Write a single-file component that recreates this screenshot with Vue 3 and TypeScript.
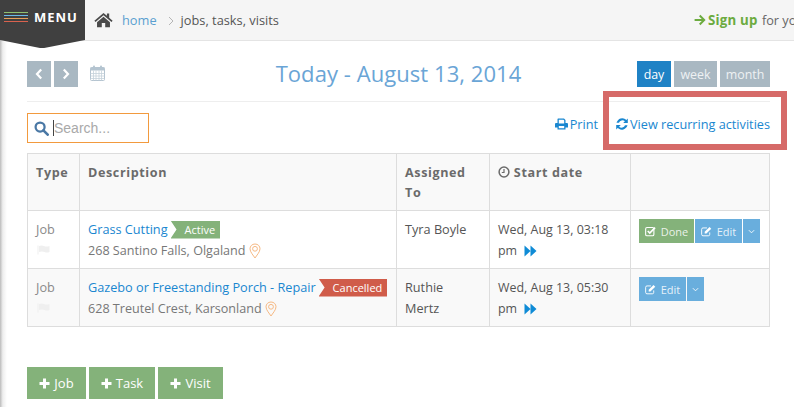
<script setup lang="ts">
interface Row {
  title: string
  status: string
  statusClass: string
  address: string
  assigned: string
  date: string
  done: boolean
}
const rows: Row[] = [
  { title: 'Grass Cutting', status: 'Active', statusClass: 'active', address: '268 Santino Falls, Olgaland', assigned: 'Tyra Boyle', date: 'Wed, Aug 13, 03:18 pm', done: true },
  { title: 'Gazebo or Freestanding Porch - Repair', status: 'Cancelled', statusClass: 'cancelled', address: '628 Treutel Crest, Karsonland', assigned: 'Ruthie Mertz', date: 'Wed, Aug 13, 05:30 pm', done: false },
]
const addButtons = ['Job', 'Task', 'Visit']
</script>

<template>
  <div class="page">
    <header class="topbar">
      <div class="menu">
        <span class="burger"><i class="l1"></i><i class="l2"></i><i class="l3"></i><i class="l4"></i></span>
        <span class="menu-text">MENU</span>
      </div>
      <nav class="crumbs">
        <svg class="home" viewBox="0 0 20 16" width="19" height="16"><path fill="#4a4a4a" d="M10 0.5 L13.6 3.6 V1.2 H16 V5.7 L19.6 8.8 L18.4 10.1 L10 3 L1.6 10.1 L0.4 8.8 Z M10 4.6 L16.8 10.3 V15.6 H11.8 V11.2 H8.2 V15.6 H3.2 V10.3 Z"/></svg>
        <a class="home-link">home</a>
        <svg class="sep" viewBox="0 0 6 10" width="6" height="10"><path d="M1 1 L5 5 L1 9" fill="none" stroke="#b5b5b5" stroke-width="1"/></svg>
        <span class="here">jobs, tasks, visits</span>
      </nav>
      <div class="signup">
        <svg viewBox="0 0 12 12" width="12" height="12"><path fill="#6cab3f" d="M6.4 0.8 L11.6 6 L6.4 11.2 L5 9.8 L7.8 7 H0.6 V5 H7.8 L5 2.2 Z"/></svg>
        <b>Sign up</b><span> for your free account</span>
      </div>
    </header>

    <main class="content">
      <section class="datebar">
        <div class="nav-group">
          <button class="nav-btn"><svg viewBox="0 0 8 12" width="8" height="12"><path d="M6.2 1.5 L2 6 L6.2 10.5" fill="none" stroke="#fff" stroke-width="2.2"/></svg></button>
          <button class="nav-btn"><svg viewBox="0 0 8 12" width="8" height="12"><path d="M1.8 1.5 L6 6 L1.8 10.5" fill="none" stroke="#fff" stroke-width="2.2"/></svg></button>
          <svg class="cal" viewBox="0 0 15 16" width="15" height="16">
            <rect x="0.5" y="2.5" width="14" height="13" rx="1" fill="#fff" stroke="#b4c4d0"/>
            <rect x="0.5" y="2.5" width="14" height="3" fill="#b4c4d0"/>
            <rect x="3" y="0.5" width="2" height="4" rx="1" fill="#b4c4d0"/>
            <rect x="10" y="0.5" width="2" height="4" rx="1" fill="#b4c4d0"/>
            <path d="M0.5 8.5 H14.5 M0.5 11 H14.5 M0.5 13.5 H14.5 M3.5 5.5 V15.5 M6 5.5 V15.5 M9 5.5 V15.5 M11.5 5.5 V15.5" stroke="#c5d2db" stroke-width="0.8" fill="none"/>
          </svg>
        </div>
        <h1 class="title">Today - August 13, 2014</h1>
        <div class="range">
          <button class="range-btn on">day</button>
          <button class="range-btn">week</button>
          <button class="range-btn">month</button>
        </div>
      </section>

      <section class="tools">
        <div class="search">
          <svg viewBox="0 0 16 16" width="15" height="15"><circle cx="6.5" cy="6.5" r="4.8" fill="none" stroke="#4a78a5" stroke-width="2.4"/><path d="M10 10 L14.6 14.6" stroke="#4a78a5" stroke-width="2.8" stroke-linecap="round"/></svg>
          <span class="caret"></span>
          <span class="placeholder">Search...</span>
        </div>
        <div class="links">
          <a class="link print">
            <svg viewBox="0 0 13 12" width="13" height="12"><path fill="#1a87d0" d="M3 0.5 H9 L10.5 2 V5 H12 Q13 5 13 6 V9.5 H10.5 V11.5 H2.5 V9.5 H0 V6 Q0 5 1 5 H2.5 V1 Z M3.8 1.7 V5.6 H9.2 V2.6 L8.4 1.7 Z M3.8 8 V10.3 H9.2 V8 Z"/></svg>
            Print
          </a>
          <a class="link recurring">
            <svg viewBox="0 0 12 12" width="12" height="12"><path fill="#1a87d0" d="M11.8 0.4 V5 H7.2 L8.9 3.3 A3.6 3.6 0 0 0 3 4.8 L0.5 4.8 A6 6 0 0 1 10.3 1.9 Z M0.2 11.6 V7 H4.8 L3.1 8.7 A3.6 3.6 0 0 0 9 7.2 L11.5 7.2 A6 6 0 0 1 1.7 10.1 Z"/></svg>
            View recurring activities
          </a>
        </div>
      </section>

      <table class="grid">
        <colgroup>
          <col class="c1" /><col class="c2" /><col class="c3" /><col class="c4" /><col class="c5" />
        </colgroup>
        <thead>
          <tr>
            <th>Type</th>
            <th>Description</th>
            <th>Assigned To</th>
            <th>
              <svg class="clock" viewBox="0 0 12 12" width="12" height="12"><circle cx="6" cy="6" r="4.9" fill="none" stroke="#6b6b6b" stroke-width="1.5"/><path d="M6 3 V6.5 H3.8" fill="none" stroke="#6b6b6b" stroke-width="1.2"/></svg>
              Start date
            </th>
            <th></th>
          </tr>
        </thead>
        <tbody>
          <tr v-for="row in rows" :key="row.title">
            <td class="type">
              <div>Job</div>
              <svg class="flag" viewBox="0 0 13 10" width="13" height="10"><path fill="#efefef" d="M0.5 0.5 H1.5 V9.5 H0.5 Z M2 1 Q4.5 0 7 1 T12.5 1 V7 Q10 8 7.5 7 T2 7 Z"/></svg>
            </td>
            <td>
              <div class="line">
                <a class="job-link">{{ row.title }}</a>
                <span class="status" :class="row.statusClass">{{ row.status }}</span>
              </div>
              <div class="addr">
                {{ row.address }}
                <svg class="pin" viewBox="0 0 12 16" width="12" height="16"><path d="M6 1 C3 1 1 3.2 1 5.8 C1 9 4.5 12.6 6 15 C7.5 12.6 11 9 11 5.8 C11 3.2 9 1 6 1 Z" fill="none" stroke="#f6b984" stroke-width="1"/><circle cx="6" cy="5.8" r="2.4" fill="none" stroke="#f6b984" stroke-width="1"/></svg>
              </div>
            </td>
            <td class="dark assigned">{{ row.assigned }}</td>
            <td class="dark date">
              {{ row.date }}
              <svg class="ff" viewBox="0 0 13 12" width="13" height="12"><path fill="#0f8bd6" d="M0.5 0.5 L6.5 6 L0.5 11.5 Z M6.5 0.5 L12.5 6 L6.5 11.5 Z"/></svg>
            </td>
            <td class="acts">
              <div class="actions">
                <button v-if="row.done" class="act done">
                  <svg viewBox="0 0 12 12" width="11" height="11"><rect x="0.7" y="1.7" width="9" height="9" rx="1.5" fill="none" stroke="#fff" stroke-width="1.2"/><path d="M3 5.5 L5.2 7.8 L11 1.8" fill="none" stroke="#fff" stroke-width="1.8"/></svg>
                  Done
                </button>
                <button class="act edit">
                  <svg viewBox="0 0 12 12" width="11" height="11"><path d="M9.5 7 V9.2 Q9.5 10.7 8 10.7 H2.2 Q0.7 10.7 0.7 9.2 V3.6 Q0.7 2.1 2.2 2.1 H6.5" fill="none" stroke="#fff" stroke-width="1"/><path fill="#fff" d="M4 6.4 L9.3 1 L11.2 2.9 L5.9 8.3 H4 Z"/></svg>
                  Edit
                </button>
                <button class="act caret-btn">
                  <svg viewBox="0 0 8 5" width="7" height="5"><path d="M1 1 L4 4 L7 1" fill="none" stroke="#fff" stroke-width="1"/></svg>
                </button>
              </div>
            </td>
          </tr>
        </tbody>
      </table>

      <section class="adds">
        <button v-for="b in addButtons" :key="b" class="add">
          <svg viewBox="0 0 11 11" width="11" height="11"><path fill="#fff" d="M4 0.5 H7 V4 H10.5 V7 H7 V10.5 H4 V7 H0.5 V4 H4 Z"/></svg>
          {{ b }}
        </button>
      </section>
    </main>

    <div class="callout"></div>
    <div class="edge"></div>
  </div>
</template>

<style scoped>
.page {
  position: relative;
  width: 794px;
  height: 407px;
  overflow: hidden;
  background: #fff;
  font-family: "Open Sans", sans-serif;
  font-size: 12.7px;
  color: #666;
}
button {
  border: 0;
  padding: 0;
  margin: 0;
  font-family: inherit;
  color: #fff;
}
.topbar {
  display: flex;
  align-items: flex-start;
  height: 40px;
  background: #f5f5f5;
  border-bottom: 1px solid #e4e4e4;
  white-space: nowrap;
}
.menu {
  position: relative;
  flex: none;
  display: flex;
  align-items: center;
  gap: 7px;
  width: 85px;
  height: 40px;
  padding: 0 0 6px 4px;
  box-sizing: border-box;
  background: #404040;
  z-index: 2;
}
.menu::after {
  content: "";
  position: absolute;
  left: 0;
  top: 40px;
  width: 85px;
  height: 8px;
  background: #404040;
  clip-path: polygon(0 0, 100% 0, 52% 100%, 47% 100%);
}
.burger {
  display: flex;
  flex-direction: column;
  gap: 2px;
  width: 24px;
}
.burger i {
  display: block;
  height: 1px;
}
.l1 { background: #8fc06f; }
.l2 { background: #6ab8ea; }
.l3 { background: #e8a05a; }
.l4 { background: #d9624e; }
.menu-text {
  color: #fff;
  font-size: 13px;
  font-weight: 700;
  letter-spacing: 1px;
  margin-left: -1px;
}
.crumbs {
  display: flex;
  align-items: center;
  height: 40px;
  padding-left: 9px;
  font-size: 12.8px;
}
.home-link {
  margin-left: 9px;
  color: #5a9fd0;
}
.sep {
  margin: 2px 7px 0 11px;
}
.here {
  color: #555;
}
.signup {
  position: absolute;
  left: 694px;
  top: 0;
  height: 40px;
  display: flex;
  align-items: center;
  gap: 2px;
  font-size: 12.7px;
  color: #666;
}
.signup b {
  color: #6cab3f;
  font-size: 13.3px;
  letter-spacing: 0.2px;
  margin-right: -1px;
}
.signup span {
  white-space: pre;
}
.content {
  padding: 20px 24px 0 27px;
}
.datebar {
  display: grid;
  grid-template-columns: 1fr auto 1fr;
  align-items: flex-start;
  height: 40px;
  border-bottom: 1px solid #eee;
}
.nav-group {
  display: flex;
  align-items: center;
  gap: 3px;
  height: 26px;
}
.nav-btn {
  display: flex;
  align-items: center;
  justify-content: center;
  width: 24px;
  height: 26px;
  background: #a9b8c2;
}
.cal {
  margin-left: 9px;
  margin-top: -2px;
}
.title {
  margin: -3px 0 0;
  font-size: 22px;
  font-weight: 400;
  line-height: 30px;
  color: #6aa5d6;
  letter-spacing: 0.06px;
}
.range {
  display: flex;
  justify-content: flex-end;
  gap: 3px;
}
.range-btn {
  height: 26px;
  font-size: 12.4px;
  background: #a9b8c2;
  color: #eef1f3;
}
.range-btn:nth-child(1) { width: 34px; }
.range-btn:nth-child(2) { width: 43px; }
.range-btn:nth-child(3) { width: 50px; }
.range-btn.on {
  background: #1f82c5;
  color: #fff;
}
.tools {
  display: flex;
  justify-content: space-between;
  height: 51px;
  padding-top: 11px;
  box-sizing: border-box;
}
.search {
  display: flex;
  align-items: center;
  width: 122px;
  height: 30px;
  padding-left: 6px;
  box-sizing: border-box;
  border: 1px solid #f29a3e;
}
.caret {
  width: 1px;
  height: 16px;
  margin-left: 4px;
  background: #444;
}
.placeholder {
  font-family: "Liberation Sans", sans-serif;
  font-size: 14px;
  color: #a9a9a9;
}
.links {
  display: flex;
  gap: 18px;
  padding-top: 3px;
}
.link {
  display: flex;
  align-items: center;
  gap: 2px;
  height: 16px;
  color: #1a87d0;
}
.grid {
  width: 742px;
  border-collapse: collapse;
  table-layout: fixed;
}
.c1 { width: 52px; }
.c2 { width: 317px; }
.c3 { width: 93px; }
.c4 { width: 141px; }
.c5 { width: 139px; }
.grid th,
.grid td {
  border: 1px solid #ddd;
  vertical-align: top;
  text-align: left;
}
.grid th {
  padding: 9px 8px 0;
  line-height: 20px;
  font-weight: 700;
  font-size: 12.6px;
  letter-spacing: 0.6px;
  color: #6b6b6b;
}
.grid td {
  padding: 8px 8px 0;
  line-height: 21px;
}
.grid thead tr {
  height: 57px;
  background: #f9f9f9;
}
.grid tbody tr {
  height: 58px;
}
.grid tbody tr:nth-child(2) {
  background: #f9f9f9;
}
.clock {
  vertical-align: -1px;
}
.type {
  color: #8a8a8a;
}
.flag {
  display: block;
  margin: 5px 0 0 1px;
}
.line {
  display: flex;
  align-items: center;
  height: 21px;
}
.job-link {
  color: #1a87d0;
  white-space: nowrap;
}
.status {
  height: 18px;
  margin-left: 3px;
  padding: 0 5px 0 14px;
  font-size: 11px;
  line-height: 18px;
  color: #fff;
  clip-path: polygon(0 0, 100% 0, 100% 100%, 0 100%, 6px 50%);
}
.status.active { background: #84b27a; }
.status.cancelled { background: #d05c4a; }
.addr {
  display: flex;
  align-items: center;
  gap: 3px;
  height: 21px;
  font-size: 12.6px;
  color: #777;
}
.dark {
  color: #555;
}
.grid td.assigned {
  padding-right: 14px;
}
.date {
  font-size: 12.45px;
}
.ff {
  margin-left: 4px;
  vertical-align: -2px;
}
.grid td.acts {
  padding-top: 8px;
}
.actions {
  display: flex;
  gap: 1px;
}
.act {
  display: flex;
  align-items: center;
  justify-content: center;
  gap: 5px;
  height: 24px;
  font-size: 11px;
  color: rgba(255, 255, 255, 0.85);
}
.done {
  width: 55px;
  background: #84b27a;
}
.edit {
  width: 47px;
  background: #69aedd;
}
.caret-btn {
  width: 17px;
  background: #69aedd;
}
.adds {
  display: flex;
  gap: 3px;
  margin-top: 40px;
}
.add {
  display: flex;
  align-items: center;
  justify-content: center;
  gap: 4px;
  height: 32px;
  font-size: 13px;
  background: #84b27a;
}
.add:nth-child(1) { width: 59px; }
.add:nth-child(2) { width: 66px; }
.add:nth-child(3) { width: 65px; }
.callout {
  position: absolute;
  left: 603px;
  top: 91px;
  width: 184px;
  height: 59px;
  box-sizing: border-box;
  border: 6px solid #d66a68;
}
.edge {
  position: absolute;
  left: 0;
  top: 40px;
  bottom: 0;
  width: 7px;
  background: linear-gradient(to right, #bbb, #eee 40%, #fff);
}
</style>
